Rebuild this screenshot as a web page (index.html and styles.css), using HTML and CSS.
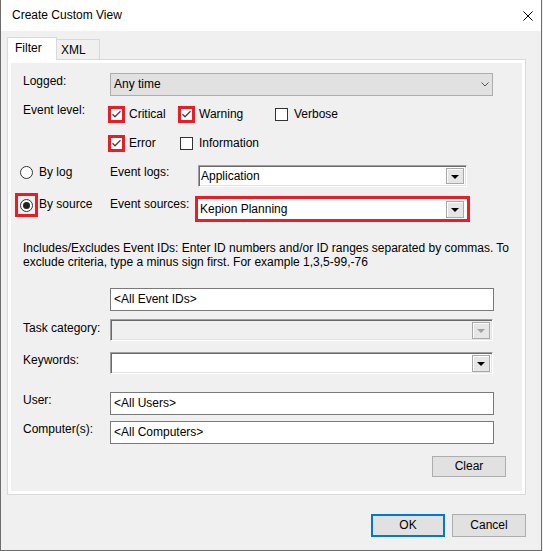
FILE: index.html
```html
<!DOCTYPE html>
<html>
<head>
<meta charset="utf-8">
<link rel="stylesheet" href="styles.css">
</head>
<body>
<div class="window">
  <div class="titlebar">
    <span class="title">Create Custom View</span>
    <svg class="close" width="10" height="10" viewBox="0 0 10 10"><path d="M0.5 0.5 L9.5 9.5 M9.5 0.5 L0.5 9.5" stroke="#000" stroke-width="1" fill="none"/></svg>
  </div>
  <div class="tabs">
    <div class="tab active">Filter</div>
    <div class="tab">XML</div>
  </div>
  <div class="panel">
    <div class="page">
      <div class="row r-logged">
        <div class="lbl lbl-logged">Logged:</div>
        <div class="dropdown">
          <span>Any time</span>
          <svg class="chev" width="8" height="5" viewBox="0 0 8 5"><path d="M0.5 0.5 L4 4 L7.5 0.5" stroke="#555" stroke-width="1" fill="none"/></svg>
        </div>
      </div>

      <div class="row r-cb1">
        <div class="lbl lbl-level">Event level:</div>
        <div class="cbitem w1"><span class="cb hl"><span class="box"><svg width="11" height="11" viewBox="0 0 11 11"><path d="M1.5 5.2 L4 7.8 L9.5 2.2" stroke="#444" stroke-width="1.3" fill="none"/></svg></span></span><span>Critical</span></div>
        <div class="cbitem w2"><span class="cb hl"><span class="box"><svg width="11" height="11" viewBox="0 0 11 11"><path d="M1.5 5.2 L4 7.8 L9.5 2.2" stroke="#444" stroke-width="1.3" fill="none"/></svg></span></span><span>Warning</span></div>
        <div class="cbitem"><span class="cb"><span class="box"></span></span><span>Verbose</span></div>
      </div>

      <div class="row r-cb2">
        <div class="cbitem w1"><span class="cb hl"><span class="box"><svg width="11" height="11" viewBox="0 0 11 11"><path d="M1.5 5.2 L4 7.8 L9.5 2.2" stroke="#444" stroke-width="1.3" fill="none"/></svg></span></span><span>Error</span></div>
        <div class="cbitem w2"><span class="cb"><span class="box"></span></span><span>Information</span></div>
      </div>

      <div class="row r-bylog">
        <div class="radiogrp">
          <span class="rslot rslot-log"><span class="radio"></span></span>
          <span class="rlabel">By log</span>
        </div>
        <div class="lbl2 lbl-logs">Event logs:</div>
        <div class="combo combo-logs">
          <span class="ctext">Application</span>
          <span class="cbtn"><span class="arrow"></span></span>
        </div>
      </div>

      <div class="row r-bysrc">
        <div class="radiogrp">
          <span class="rslot rslot-src hl"><span class="radio checked"><span class="dot"></span></span></span>
          <span class="rlabel rlabel-src">By source</span>
        </div>
        <div class="lbl2 lbl-src">Event sources:</div>
        <div class="combo combo-src">
          <span class="ctext">Kepion Planning</span>
          <span class="cbtn"><span class="arrow"></span></span>
        </div>
      </div>

      <div class="desc">Includes/Excludes Event IDs: Enter ID numbers and/or ID ranges separated by commas. To<br>exclude criteria, type a minus sign first. For example 1,3,5-99,-76</div>

      <div class="row r-ids">
        <div class="textbox tb-ids">&lt;All Event IDs&gt;</div>
      </div>

      <div class="row r-task">
        <div class="lbl lbl-task">Task category:</div>
        <div class="combo combo-wide disabled">
          <span class="ctext"></span>
          <span class="cbtn"><span class="arrow"></span></span>
        </div>
      </div>

      <div class="row r-kw">
        <div class="lbl lbl-kw">Keywords:</div>
        <div class="combo combo-wide">
          <span class="ctext"></span>
          <span class="cbtn"><span class="arrow"></span></span>
        </div>
      </div>

      <div class="row r-user">
        <div class="lbl lbl-user">User:</div>
        <div class="textbox tb-wide">&lt;All Users&gt;</div>
      </div>

      <div class="row r-comp">
        <div class="lbl lbl-comp">Computer(s):</div>
        <div class="textbox tb-wide">&lt;All Computers&gt;</div>
      </div>

      <div class="row r-clear">
        <div class="btn btn-clear">Clear</div>
      </div>
    </div>
  </div>
  <div class="buttons">
    <div class="btn btn-ok">OK</div>
    <div class="btn btn-cancel">Cancel</div>
  </div>
</div>
</body>
</html>
```

FILE: styles.css
```css
* { box-sizing: border-box; }
html, body { margin: 0; padding: 0; }
body {
  background: #f0f0f0;
  font-family: "Liberation Sans", Arial, sans-serif;
  font-size: 12px;
  color: #000;
  width: 543px;
  height: 551px;
  overflow: hidden;
}
.window {
  width: 542px;
  height: 551px;
  border: 1px solid #6d6d6d;
  border-top: none;
  background: #f0f0f0;
}
.titlebar {
  height: 31px;
  background: #fff;
  display: flex;
  align-items: center;
  justify-content: space-between;
  padding: 0 8px 0 11px;
}
.title { line-height: 15px; }
.close { display: block; }

.tabs {
  display: flex;
  align-items: flex-end;
  height: 22px;
  margin-top: 6px;
  padding-left: 6px;
}
.tab {
  border: 1px solid #d9d9d9;
  border-bottom: none;
  line-height: 15px;
}
.tab.active {
  width: 50px;
  height: 23px;
  background: #fff;
  margin-bottom: -1px;
  position: relative;
  z-index: 1;
  padding: 3px 0 0 7px;
}
.tab:not(.active) {
  width: 43px;
  height: 20px;
  border-left: none;
  padding: 3px 0 0 4px;
  background: #f0f0f0;
}

.panel {
  margin-left: 6px;
  width: 519px;
  height: 436px;
  border: 1px solid #d9d9d9;
  background: #fff;
  padding: 3px;
}
.page {
  height: 100%;
  background: #f0f0f0;
  overflow: hidden;
}

.row { display: flex; align-items: flex-start; }
.lbl { line-height: 15px; width: 87px; flex: none; }
.lbl2 { line-height: 15px; flex: none; }

.r-logged { margin-top: 10px; padding-left: 12px; height: 23px; }
.lbl-logged { margin-top: 1px; }
.dropdown {
  width: 383px;
  height: 23px;
  background: #e1e1e1;
  border: 1px solid #adadad;
  display: flex;
  align-items: center;
  justify-content: space-between;
  padding: 0 3px 0 3px;
  line-height: 15px;
}
.chev { display: block; }

.r-cb1 { margin-top: 10px; padding-left: 12px; height: 17px; align-items: center; }
.lbl-level { width: 85px; align-self: flex-start; margin-top: -3px; }
.r-cb2 { margin-top: 12px; padding-left: 97px; height: 17px; align-items: center; }
.cbitem { display: flex; align-items: center; gap: 4px; line-height: 15px; }
.cbitem.w1 { width: 70px; }
.cbitem.w2 { width: 95px; }
.cb {
  width: 17px;
  height: 17px;
  padding: 2px;
  display: flex;
  flex: none;
}
.cb .box {
  width: 13px;
  height: 13px;
  border: 1px solid #333;
  background: #fff;
  display: block;
}
.cb .box svg { display: block; }
.cb.hl { border: 2px solid #ec1c24; padding: 0; }
.cb.hl .box { border-color: #ec1c24; }

.r-bylog { margin-top: 13px; padding-left: 4px; height: 22px; }
.r-bysrc { margin-top: 9px; padding-left: 4px; height: 26px; }
.radiogrp { width: 95px; display: flex; align-items: flex-start; flex: none; }
.rslot {
  width: 23px;
  height: 24px;
  display: flex;
  align-items: center;
  justify-content: center;
  flex: none;
}
.rslot-log { margin-top: -5px; }
.rslot-src { margin-top: -3px; }
.rslot.hl { border: 3px solid #ec1c24; }
.radio {
  width: 13px;
  height: 13px;
  border: 1px solid #333;
  border-radius: 50%;
  background: #fff;
  display: flex;
  align-items: center;
  justify-content: center;
}
.radio .dot {
  width: 7px;
  height: 7px;
  border-radius: 50%;
  background: #222;
}
.rlabel { margin-left: 1px; line-height: 15px; }
.rlabel-src { margin-top: 1px; }
.lbl-logs { width: 88px; }
.lbl-src { width: 85px; margin-top: 1px; }

.combo {
  display: flex;
  align-items: center;
  justify-content: space-between;
  background: #fff;
  border-top: 1px solid #a0a0a0;
  border-left: 1px solid #a0a0a0;
  border-right: 1px solid #fff;
  border-bottom: 1px solid #fff;
  box-shadow: inset 1px 1px 0 #696969, inset -1px -1px 0 #e3e3e3;
  line-height: 15px;
}
.ctext { padding-left: 2px; }
.combo-logs { width: 269px; height: 22px; padding-right: 2px; }
.combo-src {
  width: 275px;
  height: 26px;
  border: 3px solid #ec1c24;
  box-shadow: none;
  padding-right: 3px;
}
.combo-src .ctext { padding-left: 2px; }
.combo-wide { width: 383px; height: 22px; padding-right: 2px; }
.combo.disabled { background: #f0f0f0; }
.cbtn {
  width: 18px;
  height: 16px;
  border: 1px solid #a9a9a9;
  background: #e6e6e6;
  box-shadow: inset 1px 1px 0 #fff;
  display: flex;
  align-items: center;
  justify-content: center;
  flex: none;
}
.combo-src .cbtn { height: 17px; }
.combo-wide .cbtn { height: 17px; }
.arrow {
  width: 0;
  height: 0;
  border-left: 4px solid transparent;
  border-right: 4px solid transparent;
  border-top: 4px solid #000;
  margin-top: 1px;
}
.combo.disabled .arrow { border-top-color: #a0a0a0; }

.desc {
  margin-top: 19px;
  padding-left: 12px;
  line-height: 14px;
  white-space: nowrap;
  height: 28px;
}

.textbox {
  background: #fff;
  border: 1px solid #7a7a7a;
  height: 23px;
  padding: 0 3px;
  line-height: 21px;
}
.r-ids { margin-top: 19px; padding-left: 99px; }
.tb-ids { width: 384px; }
.tb-wide { width: 384px; }

.r-task { margin-top: 8px; padding-left: 12px; }
.lbl-task { margin-top: 2px; }
.r-kw { margin-top: 11px; padding-left: 12px; }
.lbl-kw { margin-top: 1px; }
.r-user { margin-top: 18px; padding-left: 12px; }
.lbl-user { margin-top: 1px; }
.r-comp { margin-top: 6px; padding-left: 12px; }
.lbl-comp { margin-top: 1px; }

.r-clear { margin-top: 12px; justify-content: flex-end; padding-right: 16px; }
.btn {
  display: flex;
  align-items: center;
  justify-content: center;
  background: #e1e1e1;
  border: 1px solid #adadad;
  width: 74px;
  line-height: 15px;
}
.btn-clear { height: 21px; }

.buttons {
  display: flex;
  justify-content: flex-end;
  gap: 7px;
  margin-top: 19px;
  padding-right: 15px;
}
.btn-ok { height: 23px; border: 2px solid #0078d7; }
.btn-cancel { height: 23px; }
```
